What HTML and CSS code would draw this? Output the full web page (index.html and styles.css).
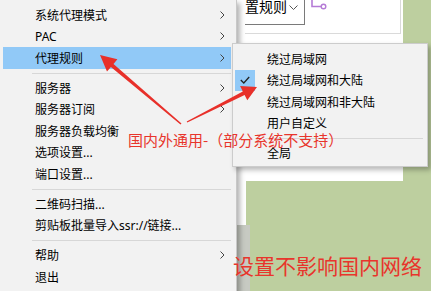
FILE: index.html
```html
<!DOCTYPE html>
<html lang="zh-CN">

<head>
    <meta charset="UTF-8">
    <meta name="viewport" content="width=device-width, initial-scale=1.0">
    <title>代理规则</title>
    <link rel="stylesheet" href="styles.css">
</head>

<body>
    <div class="desktop">
        <!-- 后面的设置窗口 -->
        <div class="win">
            <div class="group">
                <div class="combo">
                    <span>置规则</span>
                    <svg width="9" height="5" viewBox="0 0 9 5"><polyline points="0.5,0.5 4.5,4.5 8.5,0.5" fill="none" stroke="#555" stroke-width="1"/></svg>
                </div>
                <svg class="link-icon" width="18" height="10" viewBox="0 0 18 10">
                    <path d="M2 0 V6.5 H11" fill="none" stroke="#b57bd6" stroke-width="1.6"/>
                    <circle cx="13.5" cy="6.5" r="2.3" fill="#fff" stroke="#b57bd6" stroke-width="1.4"/>
                </svg>
            </div>
        </div>
        <div class="win-edge"></div>
        <div class="frame"></div>

        <!-- 托盘菜单 -->
        <div class="menu main-menu">
            <div class="item"><span>系统代理模式</span><svg class="more" width="5" height="8" viewBox="0 0 5 8"><polyline points="0.5,0.5 4,4 0.5,7.5" fill="none" stroke="#444"/></svg></div>
            <div class="item"><span>PAC</span><svg class="more" width="5" height="8" viewBox="0 0 5 8"><polyline points="0.5,0.5 4,4 0.5,7.5" fill="none" stroke="#444"/></svg></div>
            <div class="item active"><span>代理规则</span><svg class="more" width="5" height="8" viewBox="0 0 5 8"><polyline points="0.5,0.5 4,4 0.5,7.5" fill="none" stroke="#444"/></svg></div>
            <div class="sep"></div>
            <div class="item"><span>服务器</span><svg class="more" width="5" height="8" viewBox="0 0 5 8"><polyline points="0.5,0.5 4,4 0.5,7.5" fill="none" stroke="#444"/></svg></div>
            <div class="item"><span>服务器订阅</span><svg class="more" width="5" height="8" viewBox="0 0 5 8"><polyline points="0.5,0.5 4,4 0.5,7.5" fill="none" stroke="#444"/></svg></div>
            <div class="item"><span>服务器负载均衡</span></div>
            <div class="item"><span>选项设置...</span></div>
            <div class="item"><span>端口设置...</span></div>
            <div class="sep"></div>
            <div class="item"><span>二维码扫描...</span></div>
            <div class="item"><span>剪贴板批量导入ssr://链接...</span></div>
            <div class="sep"></div>
            <div class="item"><span>帮助</span><svg class="more" width="5" height="8" viewBox="0 0 5 8"><polyline points="0.5,0.5 4,4 0.5,7.5" fill="none" stroke="#444"/></svg></div>
            <div class="item"><span>退出</span></div>
        </div>

        <!-- 子菜单 -->
        <div class="menu sub-menu">
            <div class="item"><span class="check"></span><span>绕过局域网</span></div>
            <div class="item"><span class="check on"><svg width="10" height="8" viewBox="0 0 10 8"><polyline points="0.8,4 3.8,7 9.2,1" fill="none" stroke="#222" stroke-width="1.3"/></svg></span><span>绕过局域网和大陆</span></div>
            <div class="item"><span class="check"></span><span>绕过局域网和非大陆</span></div>
            <div class="item"><span class="check"></span><span>用户自定义</span></div>
            <div class="sep"></div>
            <div class="item"><span class="check"></span><span>全局</span></div>
        </div>

        <!-- 标注 -->
        <svg class="arrows" width="431" height="291" viewBox="0 0 431 291">
            <polygon points="100,55 117.4,59.3 113.5,63.9 181.5,123.5 180.5,124.5 110.9,66.9 107,71.5" fill="#e8302a"/>
            <polygon points="257,87 247.3,100.3 244.6,95 187.3,122.6 186.7,121.4 242.8,91.4 240.1,86.1" fill="#e8302a"/>
        </svg>
        <div class="note note-1">国内外通用-（部分系统不支持）</div>
        <div class="note note-2">设置不影响国内网络</div>
    </div>
</body>

</html>
```

FILE: styles.css
```css
body {
    margin: 0;
    font-family: "Noto Sans", "Noto Sans CJK SC", sans-serif;
}

.desktop {
    position: relative;
    width: 431px;
    height: 291px;
    overflow: hidden;
    background-color: #bdcf9f;
}

/* window behind the menu */
.win {
    position: absolute;
    left: 237px;
    top: 0;
    width: 166px;
    height: 181px;
    background-color: #fff;
}

.group {
    display: flex;
    align-items: flex-start;
    margin-left: 8px;
    width: 155px;
    height: 33px;
    border-right: 1px solid #dadada;
    border-bottom: 1px solid #dadada;
}

.combo {
    display: flex;
    align-items: flex-start;
    justify-content: space-between;
    box-sizing: border-box;
    width: 60px;
    height: 25px;
    padding-right: 6px;
    border-right: 1px solid #7a7a7a;
    border-bottom: 1px solid #7a7a7a;
    font-family: "Noto Sans CJK SC", sans-serif;
    font-size: 14px;
    line-height: 14px;
    color: #000;
}

.combo span {
    margin-top: -1px;
}

.combo svg {
    margin-top: 5px;
}

.link-icon {
    margin-left: 5px;
}

.win-edge {
    position: absolute;
    left: 237px;
    top: 181px;
    width: 9px;
    height: 44px;
    background-color: #fff;
}

.frame {
    position: absolute;
    left: 237px;
    top: 225px;
    width: 13px;
    height: 66px;
    background-color: #c7cac2;
}

/* menus */
.menu {
    position: absolute;
    box-sizing: border-box;
    background-color: #f2f2f2;
    font-family: "Noto Sans", "Noto Sans CJK SC", sans-serif;
    font-size: 12px;
    color: #000;
}

.main-menu {
    left: 0;
    top: 0;
    width: 237px;
    height: 300px;
    padding-top: 4px;
    border-right: 1px solid #c8c8c8;
    box-shadow: 3px 3px 5px rgba(0, 0, 0, 0.3);
}

.main-menu .item {
    display: flex;
    align-items: center;
    height: 21.5px;
    margin: 0 5px 0 3px;
    padding-left: 32px;
    padding-right: 6px;
}

.main-menu .item.active {
    background-color: #91c9f7;
}

.more {
    margin-left: auto;
}

.main-menu .sep {
    height: 1px;
    margin: 4px 5px 3.5px 32px;
    background-color: #d7d7d7;
}

.sub-menu {
    left: 232px;
    top: 43px;
    width: 196px;
    padding: 4px 0 2px;
    border: 1px solid #cccccc;
    box-shadow: 3px 3px 5px rgba(0, 0, 0, 0.28);
}

.sub-menu .item {
    display: flex;
    align-items: center;
    height: 21.5px;
    margin-left: 2px;
}

.check {
    display: flex;
    align-items: center;
    justify-content: center;
    width: 20px;
    height: 21px;
    margin-right: 12px;
}

.check.on {
    background-color: #91c9f7;
}

.sub-menu .sep {
    height: 1px;
    margin: 4px 4px 3.5px 32px;
    background-color: #d7d7d7;
}

/* red notes */
.arrows {
    position: absolute;
    left: 0;
    top: 0;
}

.note {
    position: absolute;
    font-family: "Noto Sans CJK SC", sans-serif;
    color: #e8352c;
    white-space: nowrap;
}

.note-1 {
    left: 128px;
    top: 131px;
    font-size: 15px;
    line-height: 18px;
}

.note-2 {
    left: 233px;
    top: 253px;
    font-size: 21px;
    line-height: 25px;
}
```
